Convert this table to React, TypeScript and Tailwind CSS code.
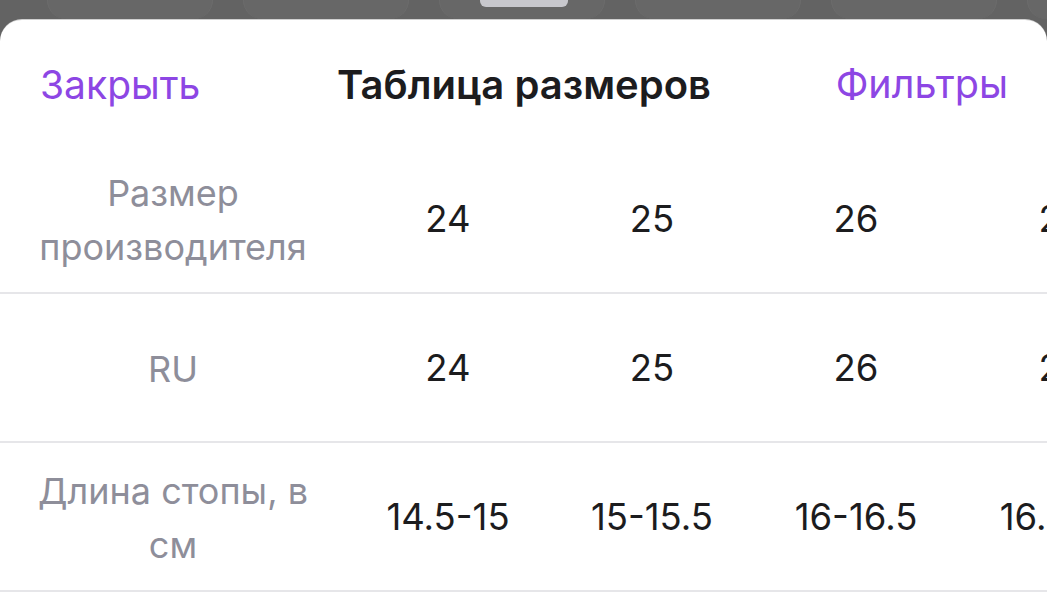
import React from "react";

const PURPLE = "text-[#8d46e4]";

const rows = [
  { label: ["Размер", "производителя"], values: ["24", "25", "26", "27"] },
  { label: ["RU"], values: ["24", "25", "26", "27"] },
  { label: ["Длина стопы, в", "см"], values: ["14.5-15", "15-15.5", "16-16.5", "16.5-17"] },
];

export default function App() {
  return (
    <div
      className="relative w-full h-[600px] overflow-hidden bg-[#636363]"
      style={{ fontFamily: "Inter, 'Noto Sans', sans-serif" }}
    >
      {/* blurred content behind the sheet */}
      <div className="flex h-[19px] gap-[30px] pl-[47px] overflow-hidden">
        {[0, 1, 2, 3, 4, 5].map((i) => (
          <div
            key={i}
            className="shrink-0 w-[166px] h-[19px] rounded-b-[40px] bg-[#676767] border-x border-[#6c6c6c]"
          />
        ))}
      </div>

      {/* grabber */}
      <div className="absolute left-[480px] top-0 w-[88px] h-[7px] rounded-b-[6px] bg-[#c8c8cd]" />

      {/* sheet */}
      <div className="h-full bg-white rounded-t-[22px] border-t border-[#8a8a8a]/40">
        <header className="grid grid-cols-[1fr_auto_1fr] items-center h-[125px] pl-[40px] pr-[39px] pt-[4px]">
          <button className={`justify-self-start text-[39px] leading-none ${PURPLE}`}>Закрыть</button>
          <h1 className="text-[40px] leading-none font-semibold text-[#1c1c1e]">
            Таблица размеров
          </h1>
          <button className={`justify-self-end text-[39.5px] leading-none ${PURPLE}`}>Фильтры</button>
        </header>

        <div className="overflow-hidden">
          {rows.map((row, r) => (
            <div
              key={r}
              className="grid grid-cols-[346px_204px_204px_204px_204px] w-[1162px] h-[149px] border-b-2 border-[#e6e6e9] items-center pt-[2px]"
            >
              <div className="text-center text-[36px] leading-[54px] text-[#8e8e9a]">
                {row.label.map((l, i) => (
                  <div key={i}>{l}</div>
                ))}
              </div>
              {row.values.map((v, i) => (
                <div key={i} className="text-center text-[36.5px] text-[#1c1c1e] whitespace-nowrap">
                  {v}
                </div>
              ))}
            </div>
          ))}
        </div>
      </div>
    </div>
  );
}
